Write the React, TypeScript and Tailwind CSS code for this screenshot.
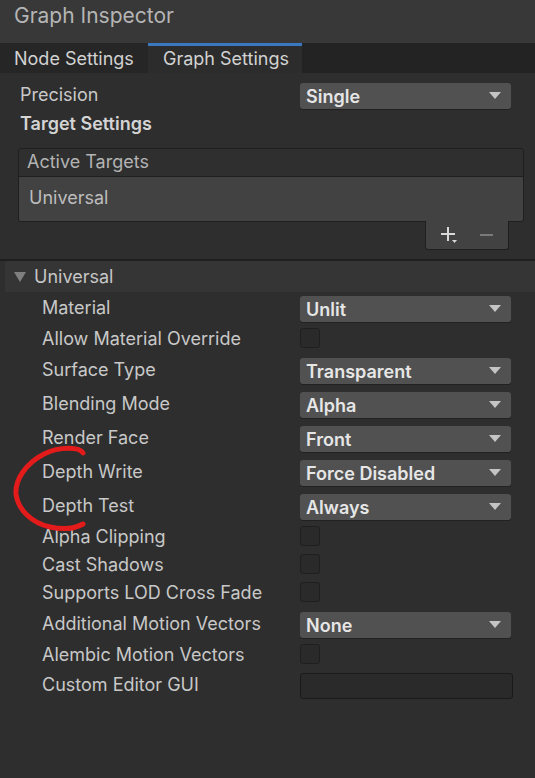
import React from "react";

type Row =
  | { kind: "dropdown"; label: string; value: string }
  | { kind: "checkbox"; label: string }
  | { kind: "text"; label: string };

const rows: Row[] = [
  { kind: "dropdown", label: "Material", value: "Unlit" },
  { kind: "checkbox", label: "Allow Material Override" },
  { kind: "dropdown", label: "Surface Type", value: "Transparent" },
  { kind: "dropdown", label: "Blending Mode", value: "Alpha" },
  { kind: "dropdown", label: "Render Face", value: "Front" },
  { kind: "dropdown", label: "Depth Write", value: "Force Disabled" },
  { kind: "dropdown", label: "Depth Test", value: "Always" },
  { kind: "checkbox", label: "Alpha Clipping" },
  { kind: "checkbox", label: "Cast Shadows" },
  { kind: "checkbox", label: "Supports LOD Cross Fade" },
  { kind: "dropdown", label: "Additional Motion Vectors", value: "None" },
  { kind: "checkbox", label: "Alembic Motion Vectors" },
  { kind: "text", label: "Custom Editor GUI" },
];

function Dropdown({ value }: { value: string }) {
  return (
    <div className="flex h-[26px] w-[211px] items-center justify-between rounded-[3px] bg-[#515151] pl-[6px] pr-[10px] text-[18px] font-semibold text-[#e6e6e6] shadow-[0_1px_0_#212121]">
      <span>{value}</span>
      <svg width="12" height="8" viewBox="0 0 12 8">
        <path d="M0 0 L12 0 L6 7 Z" fill="#c4c4c4" />
      </svg>
    </div>
  );
}

function Checkbox() {
  return (
    <div className="h-[20px] w-[20px] rounded-[3px] border border-[#1f1f1f] bg-[#2a2a2a]" />
  );
}

export default function App() {
  return (
    <div className="relative h-[778px] w-[535px] overflow-hidden bg-[#2e2e2e] font-['Inter',sans-serif]">
      {/* Title bar */}
      <div className="flex h-[43px] items-center bg-[#383838] px-[14px] pb-[12px] text-[21px] text-[#b5b5b5]">
        Graph Inspector
      </div>

      {/* Tabs */}
      <div className="flex h-[30px] bg-[#232323] text-[18px]">
        <div className="flex w-[148px] items-center border-t-[3px] border-transparent bg-[#262626] pb-[2px] pl-[14px] text-[#d2d2d2]">
          Node Settings
        </div>
        <div className="flex w-[154px] items-center border-t-[3px] border-[#3a79c0] bg-[#2c2c2c] pb-[2px] pl-[15px] text-[#d2d2d2]">
          Graph Settings
        </div>
      </div>

      {/* Graph settings */}
      <div className="pl-[20px] pr-[24px] pt-[10px] text-[18px] text-[#c8c8c8]">
        <div className="flex h-[26px] items-center">
          <div className="w-[280px] pb-[3px]">Precision</div>
          <Dropdown value="Single" />
        </div>
        <div className="flex h-[30px] items-center pb-[1px] font-semibold text-[#d4d4d4]">
          Target Settings
        </div>
      </div>

      {/* Active targets list */}
      <div className="ml-[18px] mr-[11px] mt-[9px]">
        <div className="overflow-hidden rounded-[3px] border border-[#1f1f1f]">
          <div className="flex h-[28px] items-center border-b border-[#1f1f1f] bg-[#2f2f2f] pb-[2px] pl-[8px] text-[18px] text-[#b3b3b3]">
            Active Targets
          </div>
          <div className="flex h-[44px] items-center bg-[#424242] pb-[3px] pl-[10px] text-[18px] text-[#bdbdbd]">
            Universal
          </div>
        </div>
        <div className="flex justify-end pr-[15px]">
          <div className="-mt-px flex h-[29px] w-[84px] items-center gap-[22px] rounded-b-[3px] border border-t-0 border-[#1f1f1f] bg-[#424242] pl-[14px]">
            <svg width="18" height="18" viewBox="0 0 18 18">
              <path d="M7 1 H9 V7 H15 V9 H9 V15 H7 V9 H1 V7 H7 Z" fill="#d8d8d8" />
              <path d="M12 14 L17 14 L14.5 17 Z" fill="#d8d8d8" />
            </svg>
            <svg width="14" height="4" viewBox="0 0 14 4">
              <rect x="0" y="1" width="13" height="2" fill="#7a7a7a" />
            </svg>
          </div>
        </div>
      </div>

      {/* Universal foldout */}
      <div className="mt-[9px] h-[2px] bg-[#1f1f1f]" />
      <div className="ml-[5px] flex h-[31px] items-center gap-[8px] bg-[#353535] pl-[9px] text-[18px] text-[#c6c6c6]">
        <svg width="12" height="10" viewBox="0 0 12 10">
          <path d="M0 0 L12 0 L6 10 Z" fill="#7f7f7f" />
        </svg>
        Universal
      </div>

      <div className="pl-[42px] text-[18px] text-[#c8c8c8]">
        {rows.map((row) => {
          if (row.kind === "checkbox") {
            return (
              <div key={row.label} className="flex h-[28px] items-start pt-[2px]">
                <div className="flex h-[20px] w-[258px] items-center">{row.label}</div>
                <Checkbox />
              </div>
            );
          }
          if (row.kind === "text") {
            return (
              <div key={row.label} className="flex h-[34px] items-start pt-[3px]">
                <div className="flex h-[26px] w-[258px] items-center pb-[3px]">{row.label}</div>
                <div className="h-[26px] w-[213px] rounded-[3px] border border-[#1a1a1a] bg-[#2a2a2a]" />
              </div>
            );
          }
          return (
            <div key={row.label} className="flex h-[34px] items-start pt-[4px]">
              <div className="flex h-[26px] w-[258px] items-center pb-[3px]">{row.label}</div>
              <Dropdown value={row.value} />
            </div>
          );
        })}
      </div>

      {/* Red hand-drawn annotation */}
      <svg
        className="pointer-events-none absolute left-0 top-0"
        width="535"
        height="778"
        viewBox="0 0 535 778"
      >
        <path
          d="M83 453 C80 447, 60 446, 44 454 C25 464, 15 480, 16 494 C18 510, 32 523, 50 527 C64 530, 76 528, 83 524"
          fill="none"
          stroke="#e31b1b"
          strokeWidth="5"
          strokeLinecap="round"
        />
      </svg>
    </div>
  );
}
